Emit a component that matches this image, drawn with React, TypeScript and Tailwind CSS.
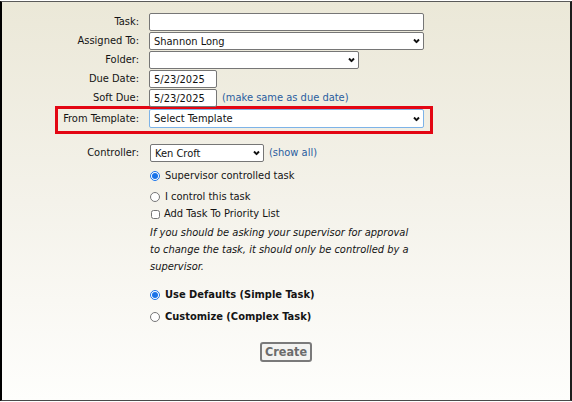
import type { ReactNode } from "react";

const FONT = "[font-family:'DejaVu_Sans_Condensed','DejaVu_Sans',sans-serif] font-stretch-condensed";

function Chevron() {
	return (
		<svg
			width="7"
			height="5"
			viewBox="0 0 7 5"
			className="pointer-events-none absolute right-[4px] top-1/2 -translate-y-1/2"
		>
			<path d="M1 1 L3.5 3.6 L6 1" fill="none" stroke="#111" strokeWidth="1.9" />
		</svg>
	);
}

function Select({
	value,
	width,
	border = "border-[#767676]",
	height = "h-[18px]",
}: {
	value: string;
	width: string;
	border?: string;
	height?: string;
}) {
	return (
		<div className={`relative ${width} ${height}`}>
			<select
				defaultValue={value}
				className={`${FONT} appearance-none w-full h-full rounded-[2px] border ${border} bg-white pl-[4px] pr-4 text-[11px] leading-none text-[#111] outline-none`}
			>
				<option value={value}>{value}</option>
			</select>
			<Chevron />
		</div>
	);
}

function TextBox({ value = "", width }: { value?: string; width: string }) {
	return (
		<input
			type="text"
			defaultValue={value}
			className={`${FONT} ${width} h-[18px] rounded-[2px] border border-[#767676] bg-white px-[4px] text-[11px] leading-none text-[#111] outline-none`}
		/>
	);
}

function Row({ label, children }: { label: string; children: ReactNode }) {
	return (
		<div className="flex items-center h-[18px] mb-px">
			<div className="w-[137px] shrink-0 text-right">{label}</div>
			<div className="ml-[10px] flex items-center">{children}</div>
		</div>
	);
}

function Option({
	type,
	checked = false,
	children,
	className = "",
}: {
	type: "radio" | "checkbox";
	checked?: boolean;
	children: ReactNode;
	className?: string;
}) {
	return (
		<label className={`flex items-center ${className}`}>
			<input
				type={type}
				defaultChecked={checked}
				className={
					type === "radio"
						? "m-0 mr-[5px] w-[10px] h-[10px] accent-[#1a73e8]"
						: "m-0 ml-px mr-[4px] w-[9px] h-[9px]"
				}
			/>
			{children}
		</label>
	);
}

export default function App() {
	return (
		<div className={`${FONT} w-[572px] h-[402px] bg-white pt-px text-[11px] text-[#141414]`}>
			<div className="h-[400px] border-t border-t-[#5a5a5a] border-l-2 border-l-black border-r-2 border-r-[#1c1c1c] border-b border-b-[#4a4a4a] bg-linear-to-b from-[#ebe8d8] via-[#f4f2ea] to-[#fefefc] pt-[11px]">
				{/* Main fields */}
				<Row label="Task:">
					<TextBox width="w-[275px]" />
				</Row>
				<Row label="Assigned To:">
					<Select value="Shannon Long" width="w-[275px]" />
				</Row>
				<Row label="Folder:">
					<Select value="" width="w-[210px]" />
				</Row>
				<Row label="Due Date:">
					<TextBox value="5/23/2025" width="w-[68px]" />
				</Row>
				<Row label="Soft Due:">
					<TextBox value="5/23/2025" width="w-[68px]" />
					<span className="ml-[5px] text-[#2a5d9f]">(make same as due date)</span>
				</Row>

				{/* Template row, boxed in red */}
				<div className="-mt-[2px] ml-[53px] w-[378px] h-[28px] border-[3px] border-[#e30613] flex items-start">
					<div className="w-[81px] shrink-0 text-right h-[19px] leading-[19px]">From Template:</div>
					<div className="ml-[10px]">
						<Select
							value="Select Template"
							width="w-[275px]"
							height="h-[19px]"
							border="border-[#7db3e8]"
						/>
					</div>
				</div>

				{/* Controller */}
				<div className="mt-[10px] flex items-center h-[18px]">
					<div className="w-[137px] shrink-0 text-right">Controller:</div>
					<div className="ml-[11px] flex items-center">
						<Select value="Ken Croft" width="w-[114px]" />
						<span className="ml-[5px] text-[#2a5d9f]">(show all)</span>
					</div>
				</div>

				<div className="pl-[148px]">
					<Option type="radio" checked className="mt-[5px] h-[18px]">
						Supervisor controlled task
					</Option>
					<Option type="radio" className="mt-[3px] h-[18px]">
						I control this task
					</Option>
					<Option type="checkbox" className="h-[16px]">
						Add Task To Priority List
					</Option>
					<p className="mt-[2px] italic leading-[17px]">
						If you should be asking your supervisor for approval
						<br />
						to change the task, it should only be controlled by a
						<br />
						supervisor.
					</p>
					<Option type="radio" checked className="mt-[11px] h-[18px] font-bold">
						Use Defaults (Simple Task)
					</Option>
					<Option type="radio" className="mt-[4px] h-[18px] font-bold">
						Customize (Complex Task)
					</Option>
				</div>

				<div className="mt-[16px] flex justify-center">
					<button
						type="button"
						className="h-[20px] px-[3px] rounded-[3px] border-2 border-[#7a7a7a] bg-[#f3f3f1] text-[12.5px] font-bold leading-none text-[#6b6b6b]"
					>
						Create
					</button>
				</div>
			</div>
		</div>
	);
}
